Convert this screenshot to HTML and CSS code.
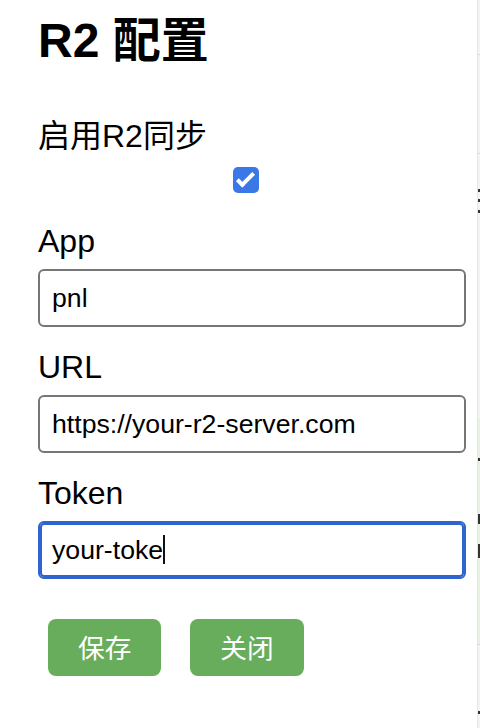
FILE: index.html
```html
<!DOCTYPE html>
<html lang="zh-CN">
<head>
<meta charset="utf-8">
<title>R2 配置</title>
<link rel="stylesheet" href="styles.css">
</head>
<body>
<div class="screen">
  <main class="modal">
    <h2 class="title">R2 配置</h2>
    <label class="label sync-label" for="sync">启用R2同步</label>
    <div class="check-row"><input type="checkbox" id="sync" class="check" checked></div>
    <div class="field">
      <label class="label" for="app">App</label>
      <input class="input" id="app" type="text" value="pnl">
    </div>
    <div class="field">
      <label class="label" for="url">URL</label>
      <input class="input" id="url" type="text" value="https://your-r2-server.com">
    </div>
    <div class="field">
      <label class="label" for="token">Token</label>
      <div class="input-wrap">
        <input class="input input-focus" id="token" type="text" value="your-toke">
        <span class="caret"></span>
      </div>
    </div>
    <div class="actions">
      <button class="btn" type="button">保存</button>
      <button class="btn" type="button">关闭</button>
    </div>
  </main>
  <aside class="backdrop">
    <div class="bd-line bd-l1"></div>
    <div class="bd-line bd-l2"></div>
    <div class="bd-mark bd-m1"></div>
    <div class="bd-mark bd-m2"></div>
    <div class="bd-mark bd-m3"></div>
    <div class="bd-green">
      <div class="bd-mark bd-m4"></div>
      <div class="bd-mark bd-m5"></div>
      <div class="bd-mark bd-m6"></div>
    </div>
    <div class="bd-line bd-l3"></div>
    <div class="bd-mark bd-m7"></div>
  </aside>
</div>
</body>
</html>
```
FILE: styles.css
```css
html, body {
  margin: 0;
  padding: 0;
  background: #fff;
}

body {
  font-family: "Liberation Sans", "Noto Sans CJK SC", sans-serif;
  color: #000;
}

.screen {
  display: flex;
  width: 480px;
  height: 728px;
  overflow: hidden;
}

.modal {
  flex: 0 0 477px;
  box-sizing: border-box;
  padding: 13px 11px 0 38px;
  background: #fff;
}

.title {
  margin: 0;
  font-size: 48px;
  line-height: 56px;
  font-weight: 700;
}

.label {
  display: block;
  font-size: 32px;
  line-height: 37px;
  margin-bottom: 9px;
}

.sync-label {
  margin-top: 49px;
  margin-bottom: 0;
}

.check-row {
  display: flex;
  padding: 12px 0 30px 195px;
}

.check {
  appearance: none;
  -webkit-appearance: none;
  position: relative;
  width: 26px;
  height: 26px;
  margin: 0;
  border-radius: 5px;
  background: #3b78e7;
}

.check::after {
  content: "";
  position: absolute;
  left: 8px;
  top: 2px;
  width: 5px;
  height: 14px;
  border: solid #fff;
  border-width: 0 4px 4px 0;
  transform: rotate(45deg);
}

.field + .field {
  margin-top: 22px;
}

.input-wrap {
  position: relative;
}

.input {
  display: block;
  box-sizing: border-box;
  width: 100%;
  height: 58px;
  margin: 0;
  padding: 0 12px;
  border: 2px solid #767676;
  border-radius: 6px;
  background: #fff;
  font-family: "Liberation Sans", sans-serif;
  font-size: 26.67px;
  color: #000;
  outline: none;
}

.input-focus {
  border-color: #2f64cf;
  box-shadow: inset 0 0 0 2px #2f64cf;
}

.caret {
  position: absolute;
  left: 125px;
  top: 14px;
  width: 2px;
  height: 29px;
  background: #111;
}

.actions {
  display: flex;
  gap: 29px;
  margin-top: 40px;
  padding-left: 10px;
}

.btn {
  height: 57px;
  padding: 0 30px;
  border: 0;
  border-radius: 8px;
  background: #68ad5c;
  color: #fff;
  font-family: "Noto Sans CJK SC", sans-serif;
  font-size: 26.67px;
  line-height: 1;
}

.backdrop {
  flex: 1;
  display: flex;
  flex-direction: column;
  background: #f4f4f4;
  border-left: 1px solid #e6e6e6;
}

.bd-line {
  height: 1px;
  background: #d8d8d8;
}

.bd-l1 { margin-top: 54px; }
.bd-l2 { margin-top: 98px; }
.bd-l3 { margin-top: 0; }

.bd-mark {
  width: 2px;
  height: 3px;
  background: #333;
}

.bd-m1 { margin-top: 35px; }
.bd-m2 { margin-top: 7px; }
.bd-m3 { margin-top: 8px; }

.bd-green {
  margin-top: 205px;
  height: 226px;
  background: #e7f1e4;
  display: flex;
  flex-direction: column;
}

.bd-m4 { margin-top: 40px; }
.bd-m5 { margin-top: 53px; height: 10px; }
.bd-m6 { margin-top: 20px; height: 14px; }
.bd-m7 { margin-top: 66px; }
```
